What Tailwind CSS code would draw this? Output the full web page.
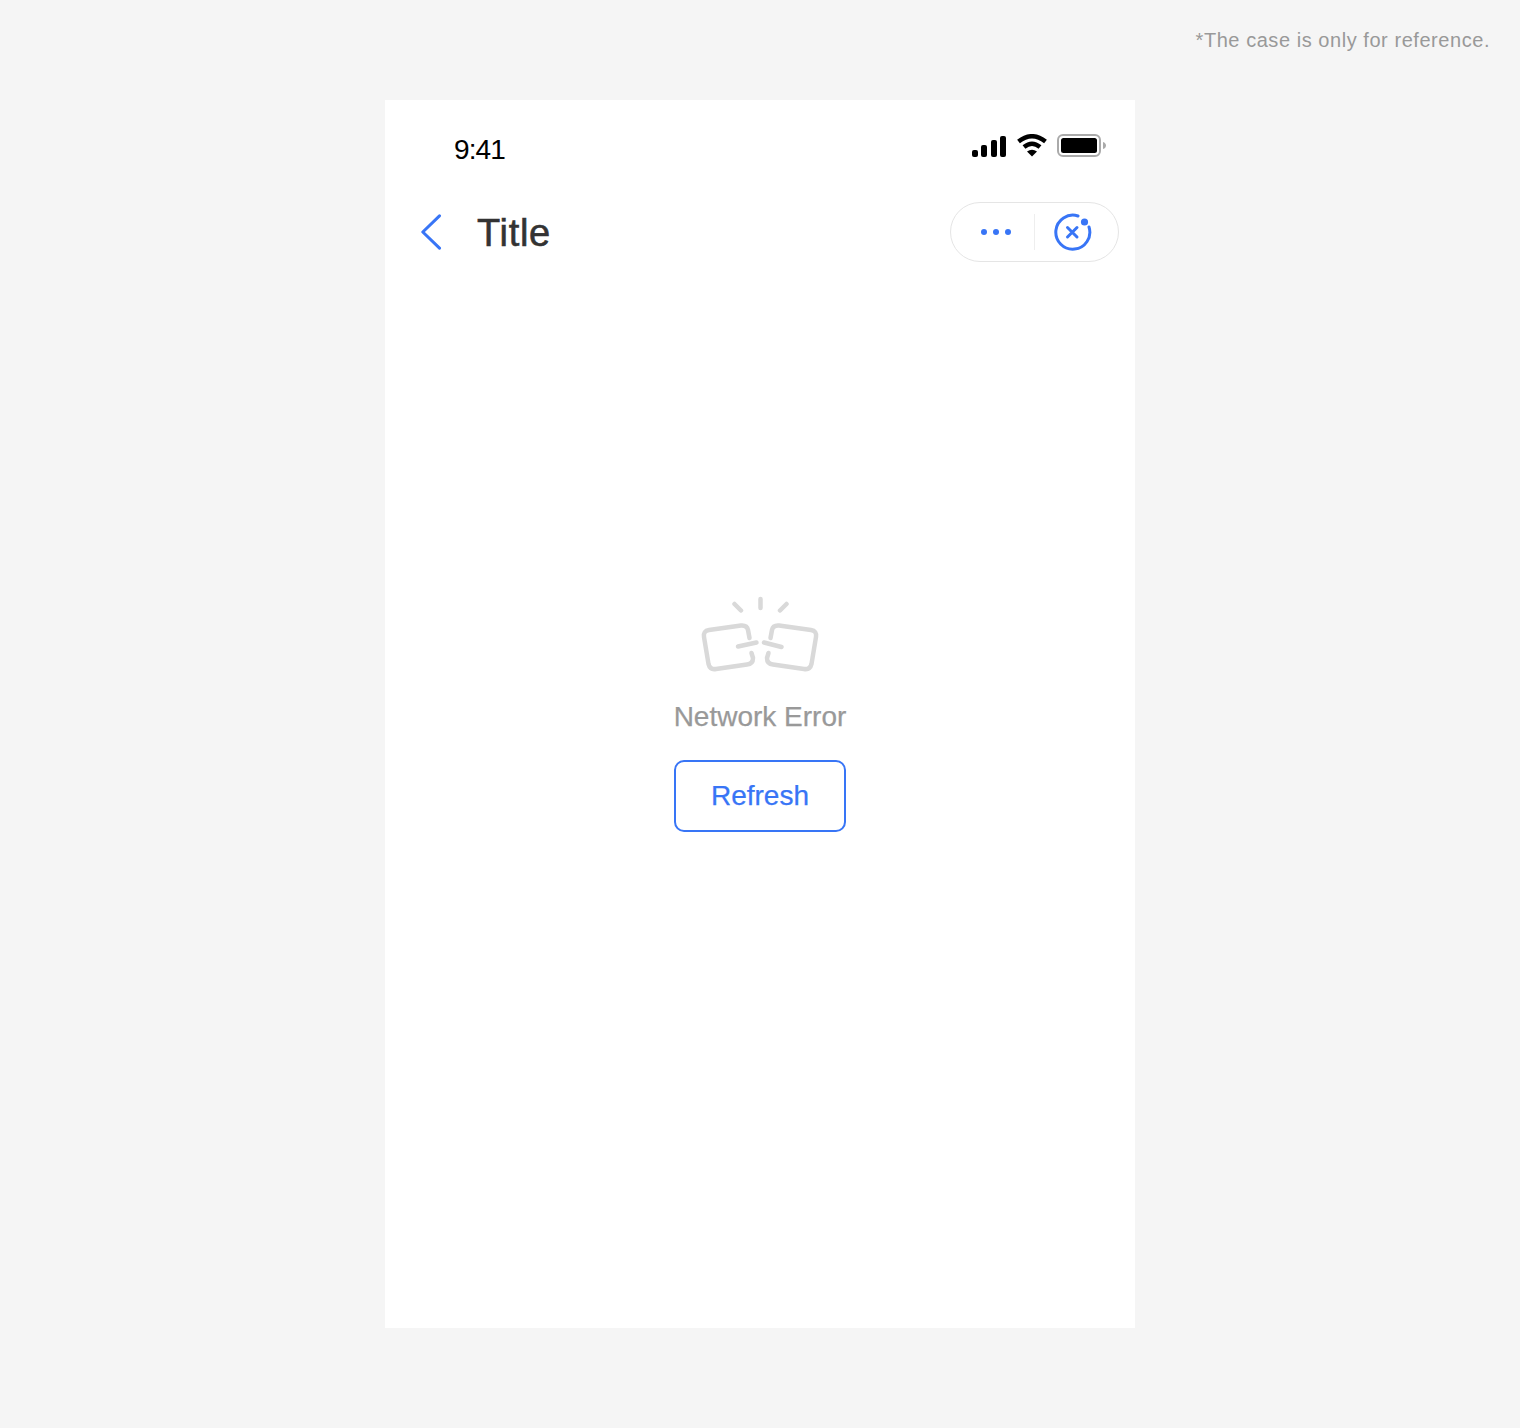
<!DOCTYPE html>
<html lang="en">
<head>
    <meta charset="UTF-8">
    <title>Network Error</title>
    <script src="https://cdn.jsdelivr.net/npm/@tailwindcss/browser@4"></script>
</head>
<body class="bg-[#f5f5f5] font-['Liberation_Sans',Arial,sans-serif]">
    <div class="h-[1428px] w-[1520px]">
        <!-- note -->
        <div class="h-[100px] pt-[24px] pr-[30px] text-right text-[20px] leading-[32px] tracking-[0.55px] text-[#999999]">*The case is only for reference.</div>

        <!-- phone -->
        <div class="mx-auto flex h-[1228px] w-[750px] flex-col bg-white">
            <!-- status bar -->
            <div class="flex h-[80px] shrink-0 items-start justify-between pt-[34px] pr-[29px] pl-[69px]">
                <span class="pt-[1px] text-[28px] leading-[30px] tracking-[-0.9px] text-black">9:41</span>
                <div class="flex items-start gap-[10px]">
                    <svg width="35" height="23" viewBox="0 0 35 23" fill="#000">
                        <rect x="0" y="16" width="6" height="7" rx="2"/>
                        <rect x="9" y="11" width="6" height="12" rx="2"/>
                        <rect x="19" y="6" width="6" height="17" rx="2"/>
                        <rect x="28" y="2" width="6" height="21" rx="2"/>
                    </svg>
                    <svg width="30" height="23" viewBox="0 0 30 23" fill="none">
                        <path d="M1.5 7.5Q15 -3 28.5 7.5" stroke="#000" stroke-width="4.5"/>
                        <path d="M7 13Q15 6.5 23 13" stroke="#000" stroke-width="4.5"/>
                        <path d="M10 17.5Q15 14 20 17.5L15 22.5Z" fill="#000"/>
                    </svg>
                    <svg width="49" height="23" viewBox="0 0 49 23" fill="none">
                        <rect x="1" y="1" width="42" height="21" rx="5" stroke="#aaaaaa" stroke-width="2"/>
                        <rect x="4" y="4" width="36" height="15" rx="2.5" fill="#000"/>
                        <path d="M46 8C48 8.5 49 10 49 11.5C49 13 48 14.5 46 15Z" fill="#aaaaaa"/>
                    </svg>
                </div>
            </div>

            <!-- nav bar -->
            <div class="flex h-[104px] shrink-0 items-center pr-[16px] pl-[36px]">
                <svg width="22" height="38" viewBox="0 0 22 38" fill="none">
                    <path d="M18.5 2.8L1.8 19L18.5 35.2" stroke="#3875f6" stroke-width="3" stroke-linecap="round" stroke-linejoin="round"/>
                </svg>
                <h1 class="ml-[34px] pt-[2px] text-[38px] leading-[48px] tracking-[0.7px] text-[#333333] [-webkit-text-stroke:0.6px_#333333]">Title</h1>
                <div class="ml-auto flex h-[60px] w-[169px] items-center rounded-full border border-[#e5e5e5]">
                    <div class="flex w-[83px] justify-center pl-[8px]">
                        <svg width="32" height="6" viewBox="0 0 32 6" fill="#3875f6">
                            <circle cx="3" cy="3" r="3"/>
                            <circle cx="15" cy="3" r="3"/>
                            <circle cx="27" cy="3" r="3"/>
                        </svg>
                    </div>
                    <div class="h-[36px] w-px bg-[#eeeeee]"></div>
                    <div class="flex flex-1 justify-center pr-[10px]">
                        <svg width="40" height="40" viewBox="0 0 40 40" fill="none" stroke="#3875f6">
                            <path d="M26 4A17 17 0 1 0 37 15" stroke-width="3" stroke-linecap="round"/>
                            <path d="M15.5 15.5L25 25M25 15.5L15.5 25" stroke-width="3" stroke-linecap="round"/>
                            <circle cx="32.5" cy="10" r="3.6" fill="#3875f6" stroke="none"/>
                        </svg>
                    </div>
                </div>
            </div>

            <!-- error state -->
            <div class="flex flex-1 flex-col items-center pt-[306px]">
                <svg width="140" height="90" viewBox="0 0 140 90" fill="none" stroke="#d9d9d9" stroke-width="4.5" stroke-linecap="round" stroke-linejoin="round">
                    <path d="M70.5 9V18M44.5 14L51 20.5M96.5 14L90 20.5"/>
                    <path d="M59.5 48L58 40Q57 35 51 35.5L19 40Q13 41 14 47L18.5 74Q20 80 26 79L57 74.5Q63 74 63 68L61.5 63"/>
                    <path d="M48 56.5L66.5 52.5"/>
                    <path d="M80.5 48L82 40Q83 35 89 35.5L121 40Q127 41 126 47L121.5 74Q120 80 114 79L83 74.5Q77 74 77 68L78.5 63"/>
                    <path d="M74 52.5L91.5 57"/>
                </svg>
                <p class="mt-[17px] text-[28px] leading-[40px] text-[#999999] [-webkit-text-stroke:0.25px_#999999]">Network Error</p>
                <button class="mt-[23px] h-[72px] w-[172px] rounded-[10px] border-2 border-[#3875f6] pb-[1px] text-[28px] text-[#3875f6] [-webkit-text-stroke:0.25px_#3875f6]">Refresh</button>
            </div>
        </div>
    </div>
</body>
</html>
